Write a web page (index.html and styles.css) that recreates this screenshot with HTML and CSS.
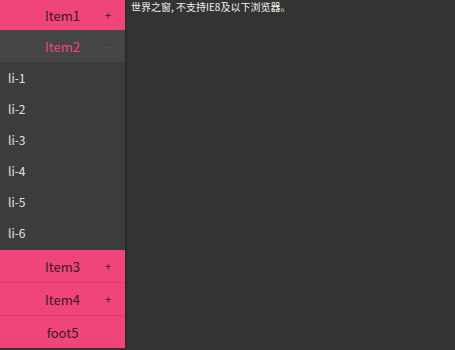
FILE: index.html
```html
<!doctype html>
<html lang="zh-CN">
    <head>
        <meta charset="UTF-8" />
        <title>Menu</title>
        <link rel="stylesheet" href="styles.css">
    </head>
    <body>
        <div class="layout">
            <nav class="menu">
                <div class="menu-item">
                    <span class="menu-item__label">Item1</span>
                    <span class="menu-item__sign">+</span>
                </div>
                <div class="menu-item menu-item--open">
                    <span class="menu-item__label">Item2</span>
                    <span class="menu-item__sign">-</span>
                </div>
                <ul class="sub-list">
                    <li>li-1</li>
                    <li>li-2</li>
                    <li>li-3</li>
                    <li>li-4</li>
                    <li>li-5</li>
                    <li>li-6</li>
                </ul>
                <div class="menu-item">
                    <span class="menu-item__label">Item3</span>
                    <span class="menu-item__sign">+</span>
                </div>
                <div class="menu-item">
                    <span class="menu-item__label">Item4</span>
                    <span class="menu-item__sign">+</span>
                </div>
                <div class="menu-item menu-item--foot">
                    <span class="menu-item__label">foot5</span>
                </div>
            </nav>
            <main class="content">
                <p class="notice">世界之窗, 不支持IE8及以下浏览器。</p>
            </main>
        </div>
    </body>
</html>
```

FILE: styles.css
```css
* {
    padding: 0;
    margin: 0;
    box-sizing: border-box;
}

body {
    font-family: "Noto Sans CJK SC", "Open Sans", sans-serif;
    background-color: #333333;
    height: 100vh;
}

.layout {
    display: flex;
    align-items: flex-start;
}

.menu {
    width: 127px;
    height: 348px;
    border-right: 2px solid #2a2a2a;
    display: flex;
    flex-direction: column;
}

.menu-item {
    height: 33px;
    display: grid;
    grid-template-columns: 1fr auto 1fr;
    align-items: center;
    background: #f0457b;
    border-bottom: 1px solid #d83c6c;
    color: #3a1a24;
    font-size: 13px;
}

.menu-item:first-child {
    height: 30px;
    border-bottom: 0;
}

.menu-item__label {
    grid-column: 2;
}

.menu-item__sign {
    grid-column: 3;
    justify-self: end;
    padding-right: 14px;
    font-size: 11px;
}

.menu-item--open {
    height: 32px;
    background: #454545;
    border-bottom: 0;
    color: #f0457b;
}

.menu-item--open .menu-item__sign {
    color: #7a5058;
}

.menu-item--foot {
    border-bottom: 0;
    height: 32px;
}

.sub-list {
    list-style: none;
    background: #3c3c3c;
    padding-bottom: 2px;
}

.sub-list li {
    height: 31px;
    display: flex;
    align-items: center;
    padding-left: 8px;
    color: #e2e2e2;
    font-size: 12px;
}

.content {
    flex: 1;
    padding: 0 4px;
}

.notice {
    color: #f2f2f2;
    font-size: 10px;
    line-height: 14px;
}
```
